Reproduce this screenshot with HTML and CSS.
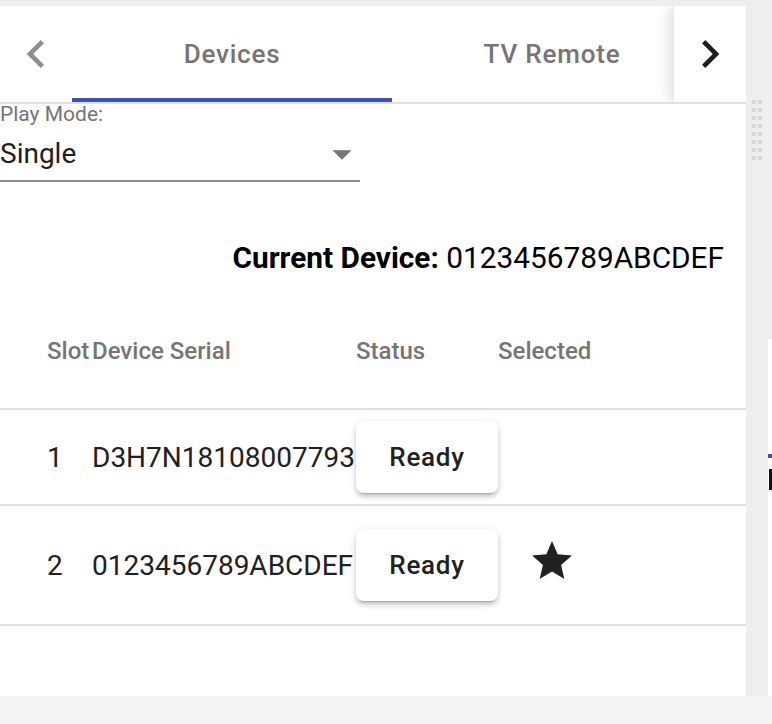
FILE: index.html
```html
<!DOCTYPE html>
<html>
<head>
<meta charset="utf-8">
<title>Devices</title>
<link rel="stylesheet" href="styles.css">
</head>
<body>
<div class="screen">
  <div class="panel">
    <div class="tabbar">
      <button class="scroll-btn left" aria-label="Scroll left">
        <svg viewBox="0 0 24 24"><path d="M15.41 16.59L10.83 12l4.58-4.59L14 6l-6 6 6 6 1.41-1.41z"/></svg>
      </button>
      <div class="tabs">
        <div class="tab selected">Devices</div>
        <div class="tab">TV Remote</div>
      </div>
      <button class="scroll-btn right" aria-label="Scroll right">
        <svg viewBox="0 0 24 24"><path d="M8.59 16.59L13.17 12 8.59 7.41 10 6l6 6-6 6-1.41-1.41z"/></svg>
      </button>
    </div>

    <div class="field">
      <div class="field-label">Play Mode:</div>
      <div class="select">
        <span>Single</span>
        <svg class="select-arrow" viewBox="0 0 24 24"><path d="M7 10l5 5 5-5z"/></svg>
      </div>
    </div>

    <div class="current"><b>Current Device:</b> 0123456789ABCDEF</div>

    <div class="table">
      <div class="row head">
        <div class="cell first">Slot</div>
        <div class="cell">Device Serial</div>
        <div class="cell">Status</div>
        <div class="cell">Selected</div>
      </div>
      <div class="row body r1">
        <div class="cell first">1</div>
        <div class="cell">D3H7N18108007793</div>
        <div class="cell"><button class="status-btn">Ready</button></div>
        <div class="cell"></div>
      </div>
      <div class="row body r2">
        <div class="cell first">2</div>
        <div class="cell">0123456789ABCDEF</div>
        <div class="cell"><button class="status-btn">Ready</button></div>
        <div class="cell star-cell">
          <svg class="star" viewBox="0 0 24 24"><path d="M12 17.27L18.18 21l-1.64-7.03L22 9.24l-7.19-.61L12 2 9.19 8.63 2 9.24l5.46 4.73L5.82 21z"/></svg>
        </div>
      </div>
    </div>
  </div>

  <div class="sidebar">
    <svg class="grip" width="10" height="60" viewBox="0 0 10 60">
      <defs>
        <pattern id="dots" width="6" height="8" patternUnits="userSpaceOnUse">
          <rect x="0" y="0" width="4" height="4" fill="#d6d6d6"/>
        </pattern>
      </defs>
      <rect x="0" y="0" width="10" height="60" fill="url(#dots)"/>
    </svg>
  </div>

  <div class="peek">
    <div class="peek-card">
      <div class="peek-line"></div>
      <div class="peek-bar"></div>
    </div>
  </div>
</div>
<div class="footer"></div>
</body>
</html>
```

FILE: styles.css
```css
* {
  box-sizing: border-box;
}

html, body {
  margin: 0;
  padding: 0;
  overflow: hidden;
}

body {
  background: #eeeeee;
  font-family: Roboto, "Noto Sans", "Liberation Sans", sans-serif;
  color: #212121;
}

.screen {
  display: flex;
  margin-top: 6px;
  height: 690px;
}

.panel {
  width: 746px;
  background: #ffffff;
  display: flex;
  flex-direction: column;
}

/* Tabs */
.tabbar {
  display: flex;
  height: 98px;
  border-bottom: 2px solid #e0e0e0;
  overflow: hidden;
}

.scroll-btn {
  flex: 0 0 72px;
  height: 96px;
  border: none;
  padding: 0;
  margin: 0;
  background: #ffffff;
  display: flex;
  align-items: center;
  justify-content: center;
}

.scroll-btn svg {
  width: 56px;
  height: 56px;
}

.scroll-btn.left svg {
  fill: #8f8f8f;
}

.scroll-btn.right {
  box-shadow: -5px 0 12px rgba(0, 0, 0, 0.13);
  position: relative;
  z-index: 1;
}

.scroll-btn.right svg {
  fill: #1e1e1e;
}

.tabs {
  flex: 1;
  display: flex;
  overflow: hidden;
}

.tab {
  flex: 0 0 320px;
  height: 96px;
  padding-top: 4px;
  border-bottom: 4px solid transparent;
  display: flex;
  align-items: center;
  justify-content: center;
  font-size: 26px;
  font-weight: 500;
  letter-spacing: 0.8px;
  color: #757575;
}

.tab.selected {
  border-bottom-color: #3f51b5;
}

/* Select field */
.field {
  width: 360px;
}

.field-label {
  font-size: 21px;
  line-height: 21px;
  height: 21px;
  color: #757575;
}

.select {
  position: relative;
  padding-top: 12px;
  padding-bottom: 10px;
  font-size: 28px;
  line-height: 33px;
  color: #212121;
  border-bottom: 2px solid #8e8e8e;
}

.select-arrow {
  position: absolute;
  right: -5px;
  top: 6px;
  width: 46px;
  height: 46px;
  fill: #757575;
}

/* Current device */
.current {
  margin-top: 58px;
  height: 36px;
  line-height: 36px;
  font-size: 29.8px;
  text-align: right;
  padding-right: 22px;
  color: #000000;
}

.current b {
  font-weight: 700;
}

/* Table */
.table {
  margin-top: 60px;
}

.row {
  display: grid;
  grid-template-columns: 92px 264px 142px 1fr;
  border-bottom: 2px solid #e0e0e0;
}

.row.head {
  height: 74px;
  padding-bottom: 42px;
  align-items: start;
}

.row.head .cell {
  font-size: 24px;
  line-height: 30px;
  font-weight: 500;
  color: #757575;
}

.row.body {
  align-items: center;
  font-size: 28px;
  color: #212121;
}

.row.r1 {
  height: 96px;
}

.row.r2 {
  height: 120px;
}

.cell {
  white-space: nowrap;
}

.cell.first {
  padding-left: 47px;
}

.status-btn {
  width: 142px;
  height: 72px;
  border: none;
  border-radius: 8px;
  background: #ffffff;
  font-family: Roboto, "Noto Sans", "Liberation Sans", sans-serif;
  font-size: 26px;
  font-weight: 500;
  letter-spacing: 0.75px;
  color: #212121;
  padding: 0;
  display: flex;
  align-items: center;
  justify-content: center;
  box-shadow: 0 5px 2px -4px rgba(0, 0, 0, 0.2),
              0 4px 4px 0 rgba(0, 0, 0, 0.14),
              0 2px 9px 0 rgba(0, 0, 0, 0.12);
}

.star-cell {
  display: flex;
  align-items: center;
  padding-left: 30px;
  padding-bottom: 8px;
}

.star {
  width: 48px;
  height: 48px;
  fill: #212121;
}

/* Right gutter */
.sidebar {
  width: 22px;
  background: #eeeeee;
}

.grip {
  display: block;
  margin-top: 94px;
  margin-left: 6px;
}

.peek {
  width: 4px;
  background: #eeeeee;
}

.peek-card {
  margin-top: 333px;
  height: 357px;
  background: #ffffff;
  padding-top: 115px;
}

.peek-line {
  height: 4px;
  background: #3f51b5;
}

.peek-bar {
  margin-top: 11px;
  margin-left: 1px;
  height: 21px;
  background: #111111;
}

.footer {
  height: 28px;
  background: #f4f4f4;
}
```
